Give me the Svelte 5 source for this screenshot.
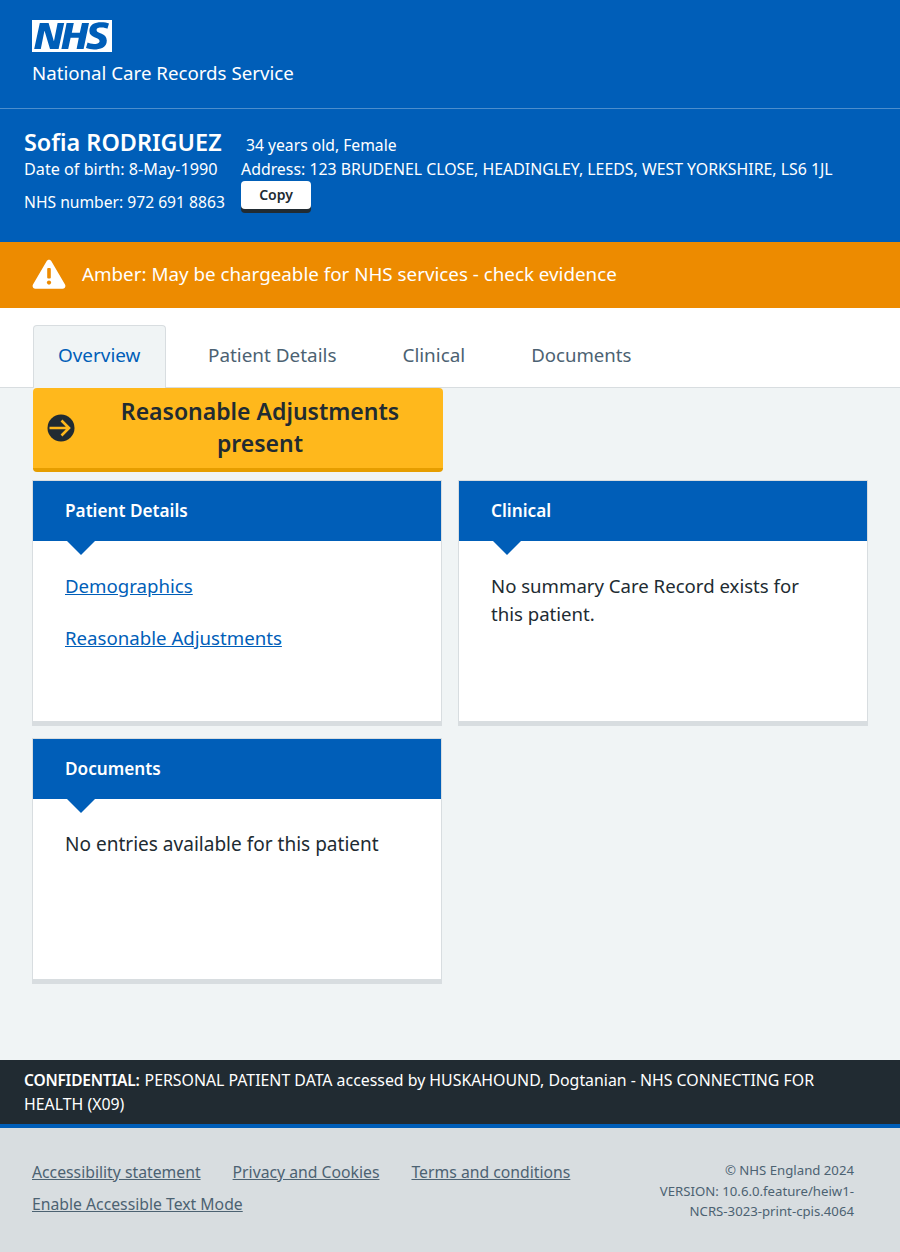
<script>
  const tabs = ['Patient Details', 'Clinical', 'Documents'];
</script>

<div class="page">
  <header class="top">
    <svg class="logo" viewBox="0 0 40 16" aria-label="NHS"><path fill="#fff" d="M0 0h40v16H0z"/><path fill="#005eb8" d="M3.9 1.5h4.4l2.6 9h.1l1.8-9h3.3l-2.8 13H9l-2.7-9h-.1l-1.8 9H1.1M17.3 1.5h3.6l-1 4.9h4L25 1.5h3.5l-2.7 13h-3.5l1.1-5.6h-4.1l-1.2 5.6h-3.4M37.7 4.4c-.7-.3-1.6-.6-2.9-.6-1.4 0-2.5.2-2.5 1.3 0 1.8 5.1 1.2 5.1 5.1 0 3.6-3.3 4.5-6.4 4.5-1.3 0-2.9-.3-4-.7l.8-2.7c.7.4 2.1.7 3.2.7s2.8-.2 2.8-1.5c0-2.1-5.1-1.3-5.1-5 0-3.4 2.9-4.4 5.8-4.4 1.6 0 3.1.2 4 .6"/></svg>
    <div class="service">National Care Records Service</div>
  </header>

  <section class="banner">
    <div class="col-left">
      <h1>Sofia RODRIGUEZ</h1>
      <div class="dob">Date of birth: 8-May-1990</div>
      <div class="nhsno">NHS number: 972 691 8863</div>
    </div>
    <div class="col-right">
      <div class="age">34 years old, Female</div>
      <div class="addr">Address: 123 BRUDENEL CLOSE, HEADINGLEY, LEEDS, WEST YORKSHIRE, LS6 1JL</div>
      <button class="copy">Copy</button>
    </div>
  </section>

  <div class="amber">
    <svg class="warn" viewBox="0 0 34 30"><path fill="#fff" d="M14.6 2.2c1.1-2 3.7-2 4.8 0l13.6 23.4c1.1 1.9-.2 4.2-2.4 4.2H3.4c-2.2 0-3.5-2.3-2.4-4.2z"/><rect x="15.2" y="9" width="3.6" height="10.5" rx="1" fill="#ed8b00"/><circle cx="17" cy="23.6" r="2.1" fill="#ed8b00"/></svg>
    <span>Amber: May be chargeable for NHS services - check evidence</span>
  </div>

  <nav class="tabs">
    <div class="tab active">Overview</div>
    {#each tabs as t}
      <div class="tab">{t}</div>
    {/each}
  </nav>

  <main class="content">
    <div class="ra-row">
      <div class="ra">
        <svg class="ra-icon" viewBox="0 0 28 28"><circle cx="14" cy="14" r="13.5" fill="#212b32"/><path d="M2.5 14h19M14.5 6.5l7.5 7.5-7.5 7.5" fill="none" stroke="#ffb81c" stroke-width="2.6"/></svg>
        <span>Reasonable Adjustments present</span>
      </div>
    </div>
    <div class="cards">
      <article class="card">
        <h2>Patient Details</h2>
        <div class="body links">
          <a href="#d">Demographics</a>
          <a href="#r">Reasonable Adjustments</a>
        </div>
      </article>
      <article class="card">
        <h2>Clinical</h2>
        <div class="body"><p>No summary Care Record exists for this patient.</p></div>
      </article>
      <article class="card">
        <h2>Documents</h2>
        <div class="body"><p class="wide">No entries available for this patient</p></div>
      </article>
    </div>
  </main>

  <div class="conf">
    <div class="conf-line"><b>CONFIDENTIAL:</b><span>PERSONAL PATIENT DATA accessed by HUSKAHOUND, Dogtanian - NHS CONNECTING FOR</span></div>
    <div>HEALTH (X09)</div>
  </div>

  <footer class="foot">
    <div class="foot-links">
      <a href="#a">Accessibility statement</a>
      <a href="#p">Privacy and Cookies</a>
      <a href="#t">Terms and conditions</a>
      <a href="#e">Enable Accessible Text Mode</a>
    </div>
    <div class="foot-meta">© NHS England 2024<br />VERSION: 10.6.0.feature/heiw1-<br />NCRS-3023-print-cpis.4064</div>
  </footer>
</div>

<style>
  :global(body) {
    margin: 0;
    font-family: "Noto Sans", "Open Sans", sans-serif;
    color: #212b32;
    background: #f0f4f5;
  }
  .page {
    width: 900px;
    height: 1252px;
    display: flex;
    flex-direction: column;
  }
  .top {
    box-sizing: border-box;
    background: #005eb8;
    padding: 20px 32px 0;
    border-bottom: 1px solid #4c8ecd;
    height: 109px;
  }
  .logo { display: block; width: 80px; height: 32px; }
  .service { color: #fff; font-size: 18.7px; line-height: 28px; margin-top: 7px; }
  .banner {
    height: 133px;
    box-sizing: border-box;
    background: #005eb8;
    color: #fff;
    padding: 18px 24px 0;
    display: flex;
    gap: 16px;
  }
  .col-left { width: 201px; flex: none; white-space: nowrap; }
  h1 { margin: 0; font-size: 23.4px; line-height: 30px; font-weight: 600; }
  .dob { line-height: 24px; font-size: 16.2px; }
  .nhsno { line-height: 24px; margin-top: 9px; font-size: 15.65px; }
  .age { line-height: 24px; padding: 6px 0 0 5px; font-size: 15.7px; }
  .addr { line-height: 24px; font-size: 15.87px; }
  .copy {
    display: block;
    width: 70px;
    height: 28px;
    padding: 0 0 2px;
    border: 0;
    border-radius: 4px;
    background: #fff;
    color: #212b32;
    box-shadow: 0 4px 0 #212b32;
    font: 600 14px "Noto Sans", sans-serif;
  }
  .amber {
    height: 66px;
    padding-bottom: 2px;
    box-sizing: border-box;
    background: #ed8b00;
    color: #fff;
    display: flex;
    align-items: center;
    gap: 16px;
    padding-left: 32px;
    font-size: 18.8px;
  }
  .warn { width: 34px; height: 30px; }
  .tabs {
    height: 80px;
    box-sizing: border-box;
    background: #fff;
    border-bottom: 1px solid #d8dde0;
    padding: 17px 0 0 33px;
    display: flex;
  }
  .tab {
    height: 62px;
    box-sizing: border-box;
    padding: 0 33px;
    line-height: 60px;
    font-size: 18.9px;
    color: #4c6272;
  }
  .tab:last-child { font-size: 18.6px; }
  .tab.active {
    width: 133px;
    padding: 0 0 0 24px;
    margin-right: 9px;
    color: #005eb8;
    background: #f0f4f5;
    border: 1px solid #d8dde0;
    border-bottom: 0;
    border-radius: 4px 4px 0 0;
    height: 63px;
    margin-bottom: -1px;
    line-height: 58px;
  }
  .content { flex: 1; padding: 0 32px; }
  .ra-row { padding-left: 1px; }
  .ra {
    width: 410px;
    height: 84px;
    box-sizing: border-box;
    background: #ffb81c;
    border-bottom: 4px solid #e69e00;
    border-radius: 4px;
    display: flex;
    align-items: center;
    padding-left: 14px;
    font-size: 23px;
    line-height: 32px;
    font-weight: 600;
    text-align: center;
  }
  .ra-icon { width: 28px; height: 28px; flex: none; }
  .ra span { flex: 1; padding: 0 8px 2px 10px; }
  .cards {
    margin-top: 8px;
    display: grid;
    grid-template-columns: 410px 410px;
    column-gap: 16px;
    row-gap: 12px;
  }
  .card {
    height: 246px;
    box-sizing: border-box;
    background: #d8dde0;
    padding: 1px 1px 5px;
    display: flex;
    flex-direction: column;
  }
  h2 {
    position: relative;
    margin: 0;
    height: 60px;
    flex: none;
    background: #005eb8;
    color: #fff;
    padding-left: 32px;
    line-height: 59px;
    font-size: 17.2px;
    font-weight: 600;
  }
  h2::after {
    content: "";
    position: absolute;
    left: 34px;
    top: 60px;
    border: 14px solid transparent;
    border-top-color: #005eb8;
    border-bottom: 0;
  }
  .body { flex: 1; background: #fff; padding: 31px 32px 0; font-size: 18.6px; line-height: 28px; }
  .body p { margin: 0; }
  .body p.wide { font-size: 19.05px; }
  .links { display: flex; flex-direction: column; gap: 24px; align-items: flex-start; font-size: 18.65px; }
  .links a { color: #005eb8; }
  .conf {
    background: #212b32;
    color: #fff;
    border-bottom: 4px solid #005eb8;
    padding: 8px 24px 0;
    font-size: 15.87px;
    line-height: 24px;
    height: 68px;
    box-sizing: border-box;
  }
  .conf-line { display: flex; gap: 5px; }
  .conf b { font-weight: 600; font-size: 15.5px; letter-spacing: -0.2px; }
  .foot {
    height: 124px;
    box-sizing: border-box;
    background: #d8dde0;
    padding: 32px 46px 0 32px;
    display: flex;
    justify-content: space-between;
  }
  .foot-links {
    width: 570px;
    display: flex;
    flex-wrap: wrap;
    column-gap: 32px;
    row-gap: 8px;
    font-size: 15.75px;
    line-height: 24px;
    align-content: flex-start;
  }
  .foot-links a { color: #4c6272; }
  .foot-meta {
    text-align: right;
    font-size: 13.2px;
    line-height: 20.5px;
    color: #4c6272;
  }
</style>
